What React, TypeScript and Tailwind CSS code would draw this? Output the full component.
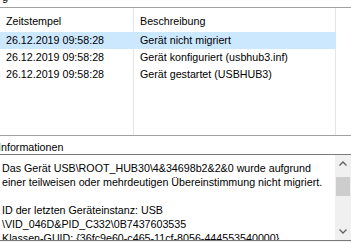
export default function App() {
	const rows = [
		{ time: '26.12.2019 09:58:28', text: 'Gerät nicht migriert', selected: true },
		{ time: '26.12.2019 09:58:28', text: 'Gerät konfiguriert (usbhub3.inf)', selected: false },
		{ time: '26.12.2019 09:58:28', text: 'Gerät gestartet (USBHUB3)', selected: false },
	]

	return (
		<div className="w-[351px] h-[242px] overflow-hidden bg-white text-black font-['Liberation_Sans',Arial,sans-serif] text-[10.7px]">
			{/* cut-off label above the list */}
			<div className="h-[7px] overflow-hidden">
				<p className="pl-[2px] -mt-[10px] leading-[14px] text-[11px]">g</p>
			</div>
			<div className="h-px bg-[#a0a0a0]" />

			{/* Events list */}
			<div className="h-[127px] flex flex-col">
				<div className="h-[24px] flex shrink-0">
					<div className="w-[134px] border-r border-[#e5e5e5] pl-[6px] pt-[5px]">Zeitstempel</div>
					<div className="w-[202px] border-r border-[#e5e5e5] pl-[6px] pt-[5px]">Beschreibung</div>
					<div className="flex-1" />
				</div>
				{rows.map((row, i) => (
					<div key={`${i}-row`} className="h-[17px] flex shrink-0">
						<div
							className={`w-[336px] flex leading-[17px] ${
								row.selected ? 'bg-[#cce8ff]' : ''
							}`}
						>
							<div
								className={`w-[134px] pl-[6px] border-r whitespace-nowrap ${
									row.selected ? 'border-transparent' : 'border-[#e5e5e5]'
								}`}
							>
								{row.time}
							</div>
							<div
								className={`w-[202px] pl-[6px] border-r whitespace-nowrap ${
									row.selected ? 'border-transparent' : 'border-[#e5e5e5]'
								}`}
							>
								{row.text}
							</div>
						</div>
						<div className="flex-1" />
					</div>
				))}
				<div className="flex-1 flex">
					<div className="w-[134px] border-r border-[#e5e5e5]" />
					<div className="w-[202px] border-r border-[#e5e5e5]" />
				</div>
			</div>

			<div className="h-px bg-[#a0a0a0]" />
			<div className="h-[18px] -ml-[2px] pt-[5px] leading-[12px]">Informationen</div>

			{/* Info text box */}
			<div className="h-[87px] border-y border-[#7a7a7a] flex">
				<div className="flex-1 overflow-hidden pl-[2px] pt-[6px] leading-[14px] whitespace-nowrap">
					<p>Das Gerät USB\ROOT_HUB30\4&amp;34698b2&amp;2&amp;0 wurde aufgrund</p>
					<p>einer teilweisen oder mehrdeutigen Übereinstimmung nicht migriert.</p>
					<p>&nbsp;</p>
					<p>ID der letzten Geräteinstanz: USB</p>
					<p>\VID_046D&amp;PID_C332\0B7437603535</p>
					<p>Klassen-GUID: {'{36fc9e60-c465-11cf-8056-444553540000}'}</p>
				</div>
				<div className="w-[16px] bg-[#f0f0f0] flex flex-col">
					<div className="h-[17px] flex items-center justify-center">
						<svg width="8" height="5" viewBox="0 0 8 5" fill="none">
							<path d="M0.5 4.5 4 1l3.5 3.5" stroke="#606060" strokeWidth="1.3" />
						</svg>
					</div>
					<div className="h-[5px]" />
					<div className="h-[19px] mx-[1px] bg-[#cdcdcd]" />
					<div className="flex-1" />
					<div className="h-[17px] flex items-center justify-center">
						<svg width="8" height="5" viewBox="0 0 8 5" fill="none">
							<path d="M0.5 0.5 4 4l3.5-3.5" stroke="#606060" strokeWidth="1.3" />
						</svg>
					</div>
				</div>
			</div>
			<div className="h-[1px] bg-[#f0f0f0]" />
		</div>
	)
}
